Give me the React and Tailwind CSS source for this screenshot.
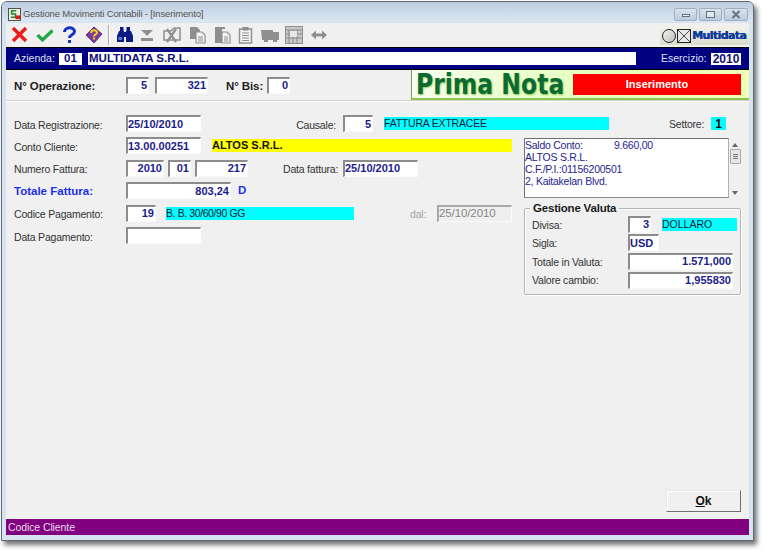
const sans = "font-['Liberation_Sans',Arial,sans-serif]";

function Field({ w, right, children, gray, h = "h-[17px]" }) {
  const tone = gray
    ? "bg-[#efefef] text-[#858585] font-normal text-[11.5px] tracking-[-0.1px] border-t-[#a8a8a8] border-l-[#a8a8a8]"
    : "bg-white text-[#1c1c8a] font-bold text-[11px] border-t-[#8c8c8c] border-l-[#8c8c8c]";
  return (
    <div className={`${w} ${h} ${tone} shrink-0 border-t-2 border-l-2 border-r border-b border-r-[#fafafa] border-b-[#fafafa] flex items-center leading-none ${right ? "justify-end pr-px" : ""}`}>
      {children}
    </div>
  );
}

function Label({ children, className = "", tight }) {
  return <div className={`text-[10.5px] tracking-[-0.2px] ${tight ? "mt-[1px]" : "mt-[3px]"} leading-none text-[#333333] whitespace-nowrap ${className}`}>{children}</div>;
}

const Bar = ({ w, color, className = "", children }) => (
  <div className={`${w} ${color} h-[13px] shrink-0 flex items-center leading-none whitespace-nowrap ${className}`}>{children}</div>
);

function Ico({ w = 18, children }) {
  return <svg width={w} height="18" viewBox={`0 0 ${w} 18`} className="shrink-0">{children}</svg>;
}

const G = "#8f8f8f";

function Toolbar() {
  return (
    <div className="h-[24px] flex items-center pl-[5px] bg-[#f0f0f0] relative">
      <Ico w={17}><path d="M2 2 L15 15 M15 2 L2 15" stroke="#ee1c1c" strokeWidth="3.4" /></Ico>
      <div className="ml-[8px]"><Ico><path d="M1.5 9 L6.5 14 L16.5 4.5" fill="none" stroke="#24a84a" strokeWidth="3.4" /></Ico></div>
      <div className="ml-[8px]"><Ico w={15}><path d="M2.5 6 C2.5 0.5 12.5 0.5 12.5 5.5 C12.5 9 7.5 8.5 7.5 12" fill="none" stroke="#1033c8" strokeWidth="3" /><rect x="6" y="14" width="3" height="3" fill="#1033c8" /></Ico></div>
      <div className="ml-[8px]"><Ico><path d="M9 1 L17 8 L9 17 L1 9 Z" fill="#7b3a9c" stroke="#4a1a66" strokeWidth="0.8" /><path d="M6 7 C6 3.5 12 3.5 12 6.5 C12 8.5 9 8.5 9 10.5" fill="none" stroke="#f6d21e" strokeWidth="2" /><rect x="8" y="11.5" width="2" height="2" fill="#f6d21e" /></Ico></div>
      <div className="ml-[5px] mr-[6px] w-px h-[20px] bg-[#a9a9a9] border-r border-r-white box-content" />
      <Ico><g fill="#0c1c80"><rect x="4" y="1" width="3.5" height="4" /><rect x="10.5" y="1" width="3.5" height="4" /><path d="M3 5 H8 V16 H1 V10 Z" /><path d="M10 5 H15 L17 10 V16 H10 Z" /><rect x="8" y="6" width="2" height="5" /></g><rect x="2.5" y="11" width="3.5" height="3" fill="#5a76d0" /></Ico>
      <div className="ml-[6px]"><Ico w={14}><path d="M1 4 H13 L7 10 Z" fill={G} /><rect x="1" y="12" width="12" height="3" fill={G} /></Ico></div>
      <div className="ml-[9px]"><Ico><path d="M1 5 H8 L11 2 H17 V14 H1 Z" fill="none" stroke={G} strokeWidth="1.5" /><path d="M4 3 L13 16 M13 3 L4 16" stroke={G} strokeWidth="2.2" /></Ico></div>
      <div className="ml-[8px]"><Ico w={17}><path d="M1 1 H8 L11 4 V13 H1 Z" fill={G} /><path d="M7 6 H13 L16 9 V17 H7 Z" fill="#f4f4f4" stroke={G} strokeWidth="1.2" /><path d="M9 11 H14 M9 13 H14 M9 15 H14" stroke={G} /></Ico></div>
      <div className="ml-[8px]"><Ico w={17}><path d="M1 1 H11 V3 H8 V17 H1 Z" fill={G} /><path d="M8 6 H13 L16 9 V17 H8 Z" fill="#f4f4f4" stroke={G} strokeWidth="1.2" /><path d="M10 11 H14 M10 13 H14 M10 15 H14" stroke={G} /></Ico></div>
      <div className="ml-[7px]"><Ico w={15}><rect x="1.5" y="3" width="12" height="14" fill="#f4f4f4" stroke={G} strokeWidth="1.5" /><rect x="4.5" y="1" width="6" height="3.5" fill={G} /><path d="M4 7 H11 M4 9.5 H11 M4 12 H11 M4 14.5 H11" stroke={G} /></Ico></div>
      <div className="ml-[7px]"><Ico w={20}><path d="M1 4 H13 V6 H19 V14 H17 V16 H13 V14 H8 V16 H4 V14 H2 Z" fill={G} /></Ico></div>
      <div className="ml-[5px]"><Ico><rect x="0.5" y="0.5" width="17" height="17" fill="#c8c8c8" stroke={G} /><path d="M0 4 H18 M0 8 H18 M0 12 H18 M4 4 V18 M8 4 V18 M12 4 V18" stroke="#8a8a8a" /><rect x="5" y="5" width="7" height="6" fill="#e8e8e8" /></Ico></div>
      <div className="ml-[7px]"><Ico><path d="M1 9 L6 4.5 V7.5 H12 V4.5 L17 9 L12 13.5 V10.5 H6 V13.5 Z" fill={G} /></Ico></div>
      <div className="ml-auto w-[89px] h-[18px] mt-[1px] bg-gradient-to-b from-[#f2f2ea] to-[#dcdccc] flex items-center pl-[2px]">
        <div className="w-[14px] h-[14px] rounded-full border border-[#222] bg-gradient-to-br from-[#f4f4f4] to-[#bdbdbd]" />
        <svg width="14" height="14" viewBox="0 0 14 14" className="ml-px shrink-0"><rect x="0.5" y="0.5" width="13" height="13" fill="#e8e8e8" stroke="#222" /><path d="M1 1 L13 13 M13 1 L1 13" stroke="#222" strokeWidth="0.8" /></svg>
        <span className="ml-px text-[11px] font-bold text-[#0b3a9a] leading-none font-['DejaVu_Sans',sans-serif] tracking-[-0.6px] [text-shadow:0.4px_0_0_#0b3a9a]">Multidata</span>
      </div>
    </div>
  );
}

const WinBtn = ({ w, children }) => (
  <div className={`${w} h-[13px] rounded-[2px] border border-[#9fb0c2] bg-gradient-to-b from-[#d8e3ee] to-[#bccbdb] flex items-center justify-center`}>{children}</div>
);

export default function App() {
  return (
    <div className={`${sans} w-[764px] h-[550px] bg-white pt-[1px] pl-[1px]`}>
      <div className="w-[753px] h-[540px] rounded-t-[6px] border border-[#5f6870] bg-[#d6e3f0] shadow-[3px_4px_5px_rgba(0,0,0,0.55)] flex flex-col">
        {/* Title bar */}
        <div className="h-[20px] shrink-0 rounded-t-[5px] bg-gradient-to-b from-[#bccde0] to-[#dbe6f0] flex items-center pl-[6px] pr-[5px]">
          <svg width="13" height="13" viewBox="0 0 14 14" className="shrink-0 mt-[4px]"><rect x="0.5" y="0.5" width="13" height="13" fill="#f3efe0" stroke="#444" /><path d="M9 3 H4 V6.5 H8 V10 H3" fill="none" stroke="#1a8a30" strokeWidth="1.8" /><rect x="8" y="8" width="5" height="4" fill="#e01818" /></svg>
          <span className="ml-[2px] mt-[4px] text-[9.5px] tracking-[-0.15px] text-[#555] whitespace-nowrap leading-none">Gestione Movimenti Contabili - [Inserimento]</span>
          <div className="ml-auto mt-[4px] flex gap-[2px]">
            <WinBtn w="w-[23px]"><div className="w-[8px] h-[3px] bg-[#e8eef4] border border-[#66727e] mt-[3px]" /></WinBtn>
            <WinBtn w="w-[23px]"><div className="w-[9px] h-[7px] border-[1.5px] border-[#66727e] bg-[#dfe7ef]" /></WinBtn>
            <WinBtn w="w-[24px]"><svg width="10" height="9" viewBox="0 0 10 9"><path d="M1.5 1 L8.5 8 M8.5 1 L1.5 8" stroke="#66727e" strokeWidth="2" /></svg></WinBtn>
          </div>
        </div>
        {/* Client */}
        <div className="flex-1 ml-[4px] mr-[4px] mb-[5px] mt-[1px] bg-[#f0f0f0] flex flex-col min-h-0">
          <Toolbar />
          {/* Azienda bar */}
          <div className="h-[23px] shrink-0 bg-[#000080] border-y border-y-black flex items-center text-[10.5px] text-[#dfe0f0] leading-none">
            <span className="ml-[8px] w-[45px]">Azienda:</span>
            <div className="w-[23px] h-[12px] bg-white text-[#10107a] font-bold text-[11.5px] flex items-center justify-center">01</div>
            <div className="ml-[6px] w-[548px] h-[13px] bg-white text-[#10107a] font-bold text-[11.5px] flex items-center pl-px">MULTIDATA S.R.L.</div>
            <span className="ml-[25px] w-[50px]">Esercizio:</span>
            <div className="w-[30px] h-[12px] bg-white text-[#10107a] font-bold text-[12px] flex items-center justify-center">2010</div>
          </div>
          {/* Operazione row */}
          <div className="h-[31px] shrink-0 flex border-b border-b-[#cfcfcf] shadow-[0_1px_0_#ffffff]">
            <div className="flex-1 flex items-center pl-[8px]">
              <div className="w-[112px] mt-[3px] text-[11.5px] tracking-[-0.1px] font-bold text-[#222] leading-none whitespace-nowrap">N° Operazione:</div>
              <Field w="w-[23px]" right>5</Field>
              <div className="w-[6px]" />
              <Field w="w-[53px]" right>321</Field>
              <div className="ml-[18px] w-[41px] mt-[3px] text-[11.5px] tracking-[-0.1px] font-bold text-[#222] leading-none whitespace-nowrap">N° Bis:</div>
              <Field w="w-[23px]" right>0</Field>
            </div>
            <div className="w-[338px] h-[30px] shrink-0 border-l border-l-[#6aa84a] border-b-2 border-b-[#8cc850] bg-gradient-to-r from-[#f8fff0] via-[#e4ffc0] to-[#f0ffb8] flex items-center">
              <span className="ml-[4px] w-[157px] text-[29px] font-bold leading-none whitespace-nowrap text-[#0c6a34] font-['DejaVu_Sans',sans-serif] [text-shadow:1px_1px_2px_#8cc850] scale-x-[0.81] origin-left">Prima Nota</span>
              <div className="w-[168px] h-[21px] bg-[#ff0000] text-white font-bold text-[11px] flex items-center justify-center">Inserimento</div>
            </div>
          </div>
          {/* Form */}
          <div className="flex-1 flex flex-col min-h-0 pl-[8px] pt-[14px]">
            <div className="flex items-center h-[17px]">
              <Label className="w-[112px]">Data Registrazione:</Label>
              <Field w="w-[75px]">25/10/2010</Field>
              <Label className="w-[135px] text-right">Causale:</Label>
              <div className="ml-[7px]"><Field w="w-[30px]" right>5</Field></div>
              <Bar w="w-[225px]" color="bg-[#00ffff]" className="ml-[11px] text-[10.5px] tracking-[-0.2px] text-[#1b1b3a]">FATTURA EXTRACEE</Bar>
              <Label className="ml-[60px]" tight>Settore:</Label>
              <Bar w="w-[15px]" color="bg-[#00ffff]" className="ml-[7px] justify-center font-bold text-[12px] text-[#111]">1</Bar>
            </div>
            <div className="flex mt-[5px]">
              {/* left column */}
              <div className="w-[510px] shrink-0 flex flex-col gap-[5.5px]">
                <div className="flex items-center h-[17px]">
                  <Label className="w-[112px]">Conto Cliente:</Label>
                  <Field w="w-[75px]">13.00.00251</Field>
                  <Bar w="w-[300px]" color="bg-[#ffff00]" className="ml-[11px] font-bold text-[11px] text-[#151515]">ALTOS S.R.L.</Bar>
                </div>
                <div className="flex items-center h-[17px]">
                  <Label className="w-[112px]">Numero Fattura:</Label>
                  <Field w="w-[38px]" right>2010</Field>
                  <div className="ml-[4px]"><Field w="w-[23px]" right>01</Field></div>
                  <div className="ml-[4px]"><Field w="w-[53px]" right>217</Field></div>
                  <Label className="ml-[35px] w-[60px]">Data fattura:</Label>
                  <Field w="w-[75px]">25/10/2010</Field>
                </div>
                <div className="flex items-center h-[17px]">
                  <div className="w-[112px] mt-[3px] text-[11.5px] font-bold leading-none text-[#1c30e8] whitespace-nowrap">Totale Fattura:</div>
                  <Field w="w-[105px]" right>803,24</Field>
                  <span className="ml-[7px] text-[11.5px] font-bold leading-none text-[#1c30e8]">D</span>
                </div>
                <div className="flex items-center h-[17px]">
                  <Label className="w-[112px]">Codice Pagamento:</Label>
                  <Field w="w-[30px]" right>19</Field>
                  <Bar w="w-[188px]" color="bg-[#00ffff]" className="ml-[10px] text-[10.5px] tracking-[-0.4px] text-[#1b1b3a]">B. B. 30/60/90 GG</Bar>
                  <Label className="ml-[56px] w-[27px] text-[#a2a2a2]">dal:</Label>
                  <Field w="w-[75px]" gray>25/10/2010</Field>
                </div>
                <div className="flex items-center h-[17px]">
                  <Label className="w-[112px]">Data Pagamento:</Label>
                  <Field w="w-[75px]"></Field>
                </div>
              </div>
              {/* right column */}
              <div className="w-[218px] shrink-0 flex flex-col">
                <div className="flex h-[60px] mt-[1px]">
                  <div className="w-[205px] border border-[#707070] border-r-[#b0b0b0] border-b-[#8a8a8a] bg-white text-[10.5px] tracking-[-0.25px] leading-[12px] text-[#25258f]">
                    <div className="flex"><span className="w-[89px]">Saldo Conto:</span><span>9.660,00</span></div>
                    <div>ALTOS S.R.L.</div>
                    <div>C.F./P.I.:01156200501</div>
                    <div>2, Kaitakelan Blvd.</div>
                  </div>
                  <div className="w-[12px] flex flex-col items-center">
                    <svg width="6" height="4" viewBox="0 0 6 4" className="mt-[5px]"><path d="M3 0 L6 4 H0 Z" fill="#666" /></svg>
                    <div className="mt-[2px] w-[11px] h-[15px] border border-[#a8a8a8] rounded-[1px] bg-[#e6e6e6] flex flex-col items-center justify-center gap-px">
                      <div className="w-[5px] h-px bg-[#777]" /><div className="w-[5px] h-px bg-[#777]" /><div className="w-[5px] h-px bg-[#777]" />
                    </div>
                    <svg width="6" height="4" viewBox="0 0 6 4" className="mt-auto mb-[3px]"><path d="M3 4 L6 0 H0 Z" fill="#666" /></svg>
                  </div>
                </div>
                {/* group */}
                <div className="relative mt-[10px] w-[217px] h-[87px] border border-[#b4b4b4] rounded-[2px] pl-[7px] pt-[6px] pr-[3px] shadow-[inset_1px_1px_0_#ffffff,1px_1px_0_#ffffff]">
                  <div className="absolute left-[5px] -top-[6px] bg-[#f0f0f0] px-[3px] text-[11.5px] tracking-[-0.2px] font-bold leading-none text-[#1c1c1c] whitespace-nowrap h-[12px]">Gestione Valuta</div>
                  <div className="flex items-center h-[18.6px]">
                    <Label tight className="w-[96px]">Divisa:</Label>
                    <Field w="w-[23px]" right>3</Field>
                    <Bar w="w-[75px]" color="bg-[#00ffff]" className="ml-[11px] text-[10.5px] text-[#1b1b3a]">DOLLARO</Bar>
                  </div>
                  <div className="flex items-center h-[18.6px]">
                    <Label tight className="w-[96px]">Sigla:</Label>
                    <Field w="w-[31px]">USD</Field>
                  </div>
                  <div className="flex items-center h-[18.6px]">
                    <Label tight className="w-[96px]">Totale in Valuta:</Label>
                    <Field w="w-[105px]" right>1.571,000</Field>
                  </div>
                  <div className="flex items-center h-[18.6px]">
                    <Label tight className="w-[96px]">Valore cambio:</Label>
                    <Field w="w-[105px]" right>1,955830</Field>
                  </div>
                </div>
              </div>
            </div>
            {/* Ok */}
            <div className="mt-auto mb-[7px] flex justify-end pr-[8px]">
              <div className="w-[75px] h-[22px] border border-[#e8e8e8] border-r-[#707070] border-b-[#707070] shadow-[inset_1px_1px_0_#ffffff] flex items-center justify-center text-[12px] font-bold text-[#111] leading-none">
                <span className="underline">O</span>k
              </div>
            </div>
          </div>
          {/* Status */}
          <div className="h-[16px] shrink-0 bg-[#800080] flex items-center pl-[2px] text-[10.5px] tracking-[-0.1px] text-[#eadcea] leading-none">Codice Cliente</div>
        </div>
      </div>
    </div>
  );
}
